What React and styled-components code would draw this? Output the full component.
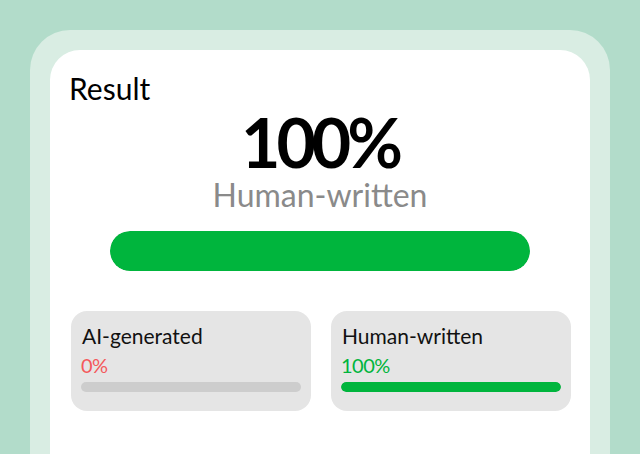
import React from "react";
import styled, { createGlobalStyle } from "styled-components";

const GlobalStyle = createGlobalStyle`
  html, body {
    margin: 0;
    padding: 0;
    height: 100%;
    overflow: hidden;
  }
  body {
    background: #b2dcca;
    font-family: "Lato", "Noto Sans", sans-serif;
  }
`;

const Page = styled.div`
  width: 640px;
  height: 454px;
  padding: 30px 30px 0;
  box-sizing: border-box;
  overflow: hidden;
`;

const Frame = styled.div`
  background: #d9ede3;
  border-radius: 40px 40px 0 0;
  padding: 20px 20px 0;
  height: 100%;
  box-sizing: border-box;
`;

const Panel = styled.div`
  background: #fff;
  border-radius: 30px 30px 0 0;
  height: 100%;
  padding: 20px 19px 0 19px;
  box-sizing: border-box;
  display: flex;
  flex-direction: column;
`;

const Title = styled.h2`
  margin: 0;
  font-size: 30px;
  font-weight: 400;
  line-height: 36px;
  color: #000;
`;

const Score = styled.div`
  text-align: center;
  font-size: 68px;
  font-weight: 700;
  line-height: 68px;
  margin-top: 2px;
  color: #000;
  letter-spacing: -4px;
`;

const Verdict = styled.div`
  text-align: center;
  font-size: 32px;
  line-height: 32px;
  margin-top: 3px;
  color: #8a8a8a;
`;

const BigTrack = styled.div`
  width: 420px;
  height: 40px;
  margin: 20px auto 0;
  border-radius: 20px;
  background: #e2e2e2;
  overflow: hidden;
`;

const BigFill = styled.div`
  height: 100%;
  border-radius: 20px;
  background: #00b53d;
`;

const Cards = styled.div`
  display: grid;
  grid-template-columns: 240px 240px;
  gap: 20px;
  margin-top: 40px;
  padding-left: 2px;
`;

const Card = styled.div`
  background: #e5e5e5;
  border-radius: 16px;
  height: 100px;
  padding: 13px 10px 0 10px;
  box-sizing: border-box;
`;

const CardLabel = styled.div`
  font-size: 21px;
  line-height: 24px;
  color: #111;
  padding-left: 1px;
`;

const CardValue = styled.div`
  font-size: 20px;
  line-height: 22px;
  margin-top: 6px;
  letter-spacing: -0.5px;
  color: ${(p) => p.$color};
`;

const SmallTrack = styled.div`
  height: 10px;
  border-radius: 5px;
  background: #cdcdcd;
  margin-top: 6px;
  overflow: hidden;
`;

const SmallFill = styled.div`
  height: 100%;
  border-radius: 5px;
  background: #00b53d;
`;

const results = [
  { label: "AI-generated", value: 0, color: "#f4595b" },
  { label: "Human-written", value: 100, color: "#00b53d" },
];

export default function App() {
  return (
    <>
      <GlobalStyle />
      <Page>
        <Frame>
          <Panel>
            <Title>Result</Title>
            <Score>100%</Score>
            <Verdict>Human-written</Verdict>
            <BigTrack>
              <BigFill style={{ width: "100%" }} />
            </BigTrack>
            <Cards>
              {results.map((r) => (
                <Card key={r.label}>
                  <CardLabel>{r.label}</CardLabel>
                  <CardValue $color={r.color}>{r.value}%</CardValue>
                  <SmallTrack>
                    <SmallFill style={{ width: `${r.value}%` }} />
                  </SmallTrack>
                </Card>
              ))}
            </Cards>
          </Panel>
        </Frame>
      </Page>
    </>
  );
}
